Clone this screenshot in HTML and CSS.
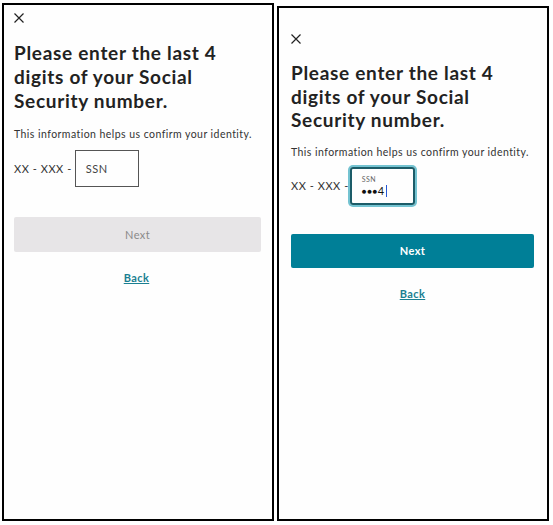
FILE: index.html
```html
<!DOCTYPE html>
<html lang="en">
<head>
<meta charset="utf-8">
<title>SSN</title>
<link rel="stylesheet" href="styles.css">
</head>
<body>
<div class="stage">
  <section class="frame frame-a">
    <svg class="close" viewBox="0 0 10 10" width="10" height="10"><path d="M0.5 0.5L9.5 9.5M9.5 0.5L0.5 9.5" stroke="#222" stroke-width="1.2" fill="none"/></svg>
    <h1 class="title">Please enter the last 4 digits of your Social Security number.</h1>
    <p class="info">This information helps us confirm your identity.</p>
    <div class="ssn-row">
      <span class="prefix">XX - XXX -</span>
      <div class="ssn-box">SSN</div>
    </div>
    <button class="next next-disabled">Next</button>
    <a class="back" href="#">Back</a>
  </section>
  <section class="frame frame-b">
    <svg class="close" viewBox="0 0 10 10" width="10" height="10"><path d="M0.5 0.5L9.5 9.5M9.5 0.5L0.5 9.5" stroke="#222" stroke-width="1.2" fill="none"/></svg>
    <h1 class="title">Please enter the last 4 digits of your Social Security number.</h1>
    <p class="info">This information helps us confirm your identity.</p>
    <div class="ssn-row">
      <span class="prefix">XX - XXX -</span>
      <div class="ssn-box ssn-focus">
        <span class="ssn-label">SSN</span>
        <span class="ssn-value"><span class="dots">&#9679;&#9679;&#9679;</span>4<span class="caret"></span></span>
      </div>
    </div>
    <button class="next next-active">Next</button>
    <a class="back" href="#">Back</a>
  </section>
</div>
</body>
</html>
```
FILE: styles.css
```css
html, body {
  margin: 0;
  padding: 0;
  background: #fff;
}
body {
  font-family: Lato, "Open Sans", sans-serif;
  color: #222;
}
.stage {
  display: flex;
  align-items: flex-end;
  gap: 3px;
  padding-left: 2px;
  height: 521px;
}
.frame {
  box-sizing: border-box;
  width: 272px;
  border: 2px solid #000;
  display: flex;
  flex-direction: column;
  align-items: flex-start;
  background: #fefefe;
}
.frame-a {
  height: 518px;
  padding: 8px 11px 0 10px;
}
.frame-b {
  height: 515px;
  padding: 26px 13px 0 12px;
}
.close {
  display: block;
  width: 10px;
  height: 10px;
}
.title {
  margin: 18px 0 0;
  font-size: 19px;
  line-height: 24px;
  font-weight: 700;
  letter-spacing: 0.7px;
  color: #222;
  width: 240px;
}
.frame-b .title {
  margin-top: 17px;
  line-height: 23.5px;
}
.info {
  margin: 13px 0 0;
  font-size: 10.5px;
  line-height: 16px;
  letter-spacing: 0.45px;
  color: #333;
}
.frame-b .info { margin-top: 12px; }
.ssn-row {
  display: flex;
  align-items: center;
  margin-top: 8px;
}
.frame-b .ssn-row { margin-top: 7px; }
.prefix {
  font-size: 11px;
  letter-spacing: 0.55px;
  color: #333;
  margin-right: 3px;
}
.frame-b .prefix { margin-right: 1px; }
.ssn-box {
  box-sizing: border-box;
  width: 64px;
  height: 37px;
  border: 1px solid #555;
  display: flex;
  align-items: center;
  padding-left: 10px;
  font-size: 11px;
  letter-spacing: 0.5px;
  color: #444;
}
.ssn-focus {
  width: 65px;
  height: 38px;
  border: 2px solid #1c5c68;
  border-radius: 3px;
  box-shadow: 0 0 0 2px #74c3d1;
  flex-direction: column;
  align-items: flex-start;
  justify-content: flex-start;
  padding: 6px 0 0 10px;
}
.ssn-label {
  font-size: 7px;
  line-height: 9px;
  color: #666;
  letter-spacing: 0.4px;
}
.ssn-value {
  display: flex;
  align-items: center;
  font-size: 11px;
  line-height: 14px;
  color: #111;
}
.dots {
  font-size: 8px;
  letter-spacing: 0.5px;
}
.caret {
  display: inline-block;
  width: 1px;
  height: 12px;
  background: #2457d6;
  margin-left: 1px;
}
.next {
  margin-top: 30px;
  width: 247px;
  height: 35px;
  border: none;
  border-radius: 2px;
  font-family: Lato, "Open Sans", sans-serif;
  font-size: 11px;
  letter-spacing: 0.4px;
}
.next-disabled {
  background: #e7e5e7;
  color: #8a8a8a;
}
.next-active {
  margin-top: 29px;
  width: 243px;
  height: 34px;
  background: #007f97;
  color: #fff;
  font-weight: 700;
}
.back {
  align-self: center;
  margin-top: 18px;
  font-size: 11px;
  line-height: 16px;
  font-weight: 700;
  letter-spacing: 0.4px;
  color: #1a7f91;
  text-decoration: underline;
}
.frame-a .back { margin-right: 2px; }
```
